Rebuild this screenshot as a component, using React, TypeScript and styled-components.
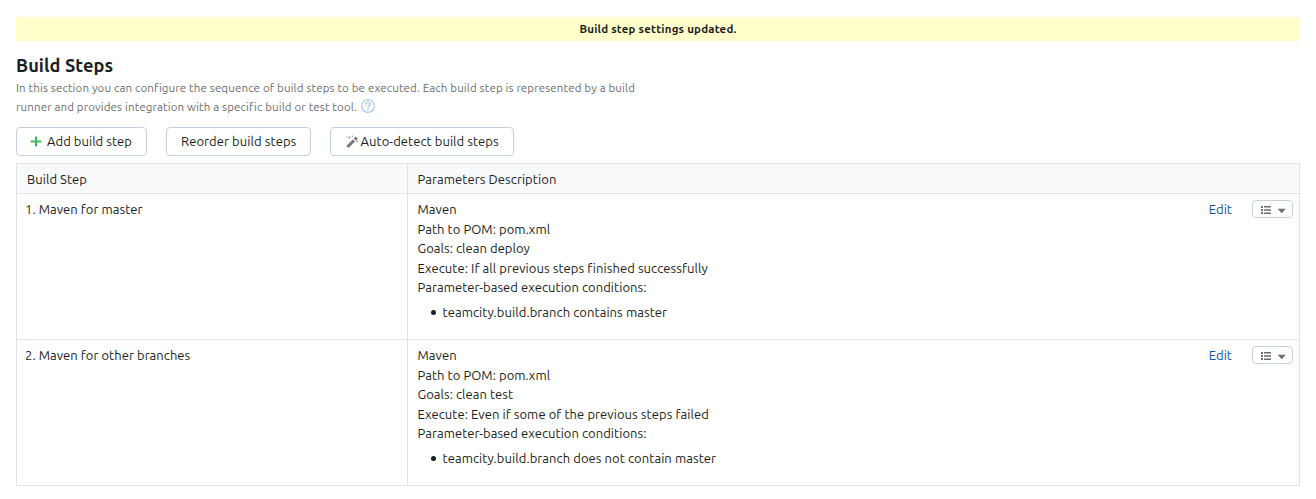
import React from "react";
import styled, { createGlobalStyle } from "styled-components";

const GlobalStyle = createGlobalStyle`
  * { box-sizing: border-box; }
  body {
    margin: 0;
    background: #fff;
    color: #1b1e21;
    font: 13px/19.5px Ubuntu, "Noto Sans", "Open Sans", sans-serif;
  }
`;

const Page = styled.main`
  padding: 17px 16px 0;
`;

const Text = styled.span<{ $track?: number }>`
  letter-spacing: ${(p) => p.$track ?? 0.05}px;
  white-space: nowrap;
`;

const Banner = styled.div`
  height: 24px;
  background: #ffffcc;
  text-align: center;
  font-size: 11.5px;
  font-weight: 700;
  line-height: 24px;
`;

const Title = styled.h1`
  margin: 11px 0 0;
  font-size: 18.2px;
  line-height: 26px;
  font-weight: 700;
`;

const Description = styled.p`
  display: flex;
  flex-direction: column;
  margin: 0;
  color: #6c6e70;
  font-size: 11.5px;
  line-height: 19px;
`;

const DescriptionLine = styled.span`
  display: flex;
  align-items: flex-start;
  gap: 4px;
  height: 19px;
`;

const Toolbar = styled.div`
  display: flex;
  gap: 19px;
  margin: 11px 0 7px;
`;

const Button = styled.button<{ $width: number; $gap?: number; $inset?: number }>`
  display: flex;
  align-items: center;
  width: ${(p) => p.$width}px;
  height: 29px;
  padding: 0 0 0 ${(p) => p.$inset ?? 14}px;
  gap: ${(p) => p.$gap ?? 0}px;
  border: 1px solid #c3d1de;
  border-radius: 4px;
  background: #fff;
  color: inherit;
  font: inherit;
`;

const Table = styled.div`
  border: 1px solid #dfe3ea;
`;

const Row = styled.div`
  display: grid;
  grid-template-columns: 390px 1fr;
  height: 146px;
  & + & { border-top: 1px solid #dfe3ea; }
`;

const HeaderRow = styled(Row)`
  height: 29px;
  background: #f7f9fb;
  line-height: 31px;
`;

const HeaderCell = styled.div`
  padding-left: 10px;
  & + & { border-left: 1px solid #dfe3ea; padding-left: 9.5px; }
`;

const NameCell = styled.div`
  padding: 6px 8px;
`;

const ParamsCell = styled.div`
  display: flex;
  justify-content: space-between;
  padding: 6px 6px 0 9.5px;
  border-left: 1px solid #dfe3ea;
`;

const Params = styled.div`
  display: flex;
  flex-direction: column;
`;

const Conditions = styled.ul`
  margin: 5px 0 0;
  padding: 0;
  list-style: none;
`;

const Condition = styled.li`
  display: flex;
  align-items: center;
  gap: 7px;
  padding-left: 13px;
  &::before {
    content: "";
    width: 5px;
    height: 5px;
    margin-top: 1px;
    border-radius: 50%;
    background: #1b1e21;
  }
`;

const Actions = styled.div`
  display: flex;
  align-items: flex-start;
  gap: 20px;
`;

const EditLink = styled.a`
  color: #0b5a9a;
`;

const MenuButton = styled.button`
  display: flex;
  width: 41px;
  height: 18px;
  padding: 0;
  border: 1px solid #c3d1de;
  border-radius: 4px;
  background: #fff;
`;

const HelpMark = styled.svg`
  margin-top: 2px;
`;

const PlusIcon = () => (
  <svg width="12" height="12" viewBox="0 0 12 12">
    <path d="M6 .5v10M.7 5.5h10.6" stroke="#3dba5b" strokeWidth="2" />
  </svg>
);

const WandIcon = () => (
  <svg width="14" height="14" viewBox="0 0 14 14">
    <path d="M2.4 12 9 5.4" stroke="#777" strokeWidth="3" />
    <path d="m9.8 4.6 2-2" stroke="#777" strokeWidth="3" />
    <path d="m8.6 4.7 1 1 .5-.5-1-1z" fill="#fff" />
    <path d="M4.3 1v3M2.8 2.5h3M7.5 .5v1.6M6.7 1.3h1.6M12.2 5.5v2M11.2 6.5h2M1.5 1v1" stroke="#999" strokeWidth=".7" />
  </svg>
);

const HelpIcon = () => (
  <HelpMark width="14" height="14" viewBox="0 0 14 14" fill="none" stroke="#a9cce6">
    <circle cx="7" cy="7" r="6.3" strokeWidth="1.2" />
    <path d="M4.9 5.4c0-1.2.9-2 2.1-2s2.1.8 2.1 1.8C9.1 6.6 7 6.7 7 8.4" strokeWidth="1.4" />
    <path d="M7 9.4v1.5" strokeWidth="1.5" />
  </HelpMark>
);

const MenuIcon = () => (
  <svg width="39" height="16" viewBox="0 0 39 16" fill="#6c6e70">
    <path d="M8 5h2v2H8zM8 8h2v2H8zM8 11h2v2H8zM11 5h7v1.5h-7zM11 8.3h7v1.5h-7zM11 11.5h7V13h-7z" />
    <path d="M24.6 7.8h8.2l-4.1 4.4z" />
  </svg>
);

interface Step {
  name: string;
  lines: string[];
  condition: string;
}

const steps: Step[] = [
  {
    name: "1. Maven for master",
    lines: ["Maven", "Path to POM: pom.xml", "Goals: clean deploy", "Execute: If all previous steps finished successfully", "Parameter-based execution conditions:"],
    condition: "teamcity.build.branch contains master",
  },
  {
    name: "2. Maven for other branches",
    lines: ["Maven", "Path to POM: pom.xml", "Goals: clean test", "Execute: Even if some of the previous steps failed", "Parameter-based execution conditions:"],
    condition: "teamcity.build.branch does not contain master",
  },
];

export default function App() {
  return (
    <Page>
      <GlobalStyle />
      <Banner><Text $track={0.19}>Build step settings updated.</Text></Banner>
      <Title><Text $track={0.08}>Build Steps</Text></Title>
      <Description>
        <DescriptionLine>
          <Text $track={0.145}>In this section you can configure the sequence of build steps to be executed. Each build step is represented by a build</Text>
        </DescriptionLine>
        <DescriptionLine>
          <Text $track={0.145}>runner and provides integration with a specific build or test tool.</Text>
          <HelpIcon />
        </DescriptionLine>
      </Description>
      <Toolbar>
        <Button $width={131} $gap={5} $inset={13}><PlusIcon /><Text>Add build step</Text></Button>
        <Button $width={145}><Text $track={0.08}>Reorder build steps</Text></Button>
        <Button $width={184} $gap={1.5}><WandIcon /><Text $track={0.06}>Auto-detect build steps</Text></Button>
      </Toolbar>
      <Table>
        <HeaderRow>
          <HeaderCell><Text>Build Step</Text></HeaderCell>
          <HeaderCell><Text $track={0.08}>Parameters Description</Text></HeaderCell>
        </HeaderRow>
        {steps.map((step) => (
          <Row key={step.name}>
            <NameCell><Text>{step.name}</Text></NameCell>
            <ParamsCell>
              <Params>
                {step.lines.map((line) => (
                  <Text key={line} $track={line.startsWith("Execute") ? 0.07 : 0.05}>{line}</Text>
                ))}
                <Conditions>
                  <Condition><Text $track={0.07}>{step.condition}</Text></Condition>
                </Conditions>
              </Params>
              <Actions>
                <EditLink><Text>Edit</Text></EditLink>
                <MenuButton aria-label="Step actions"><MenuIcon /></MenuButton>
              </Actions>
            </ParamsCell>
          </Row>
        ))}
      </Table>
    </Page>
  );
}
